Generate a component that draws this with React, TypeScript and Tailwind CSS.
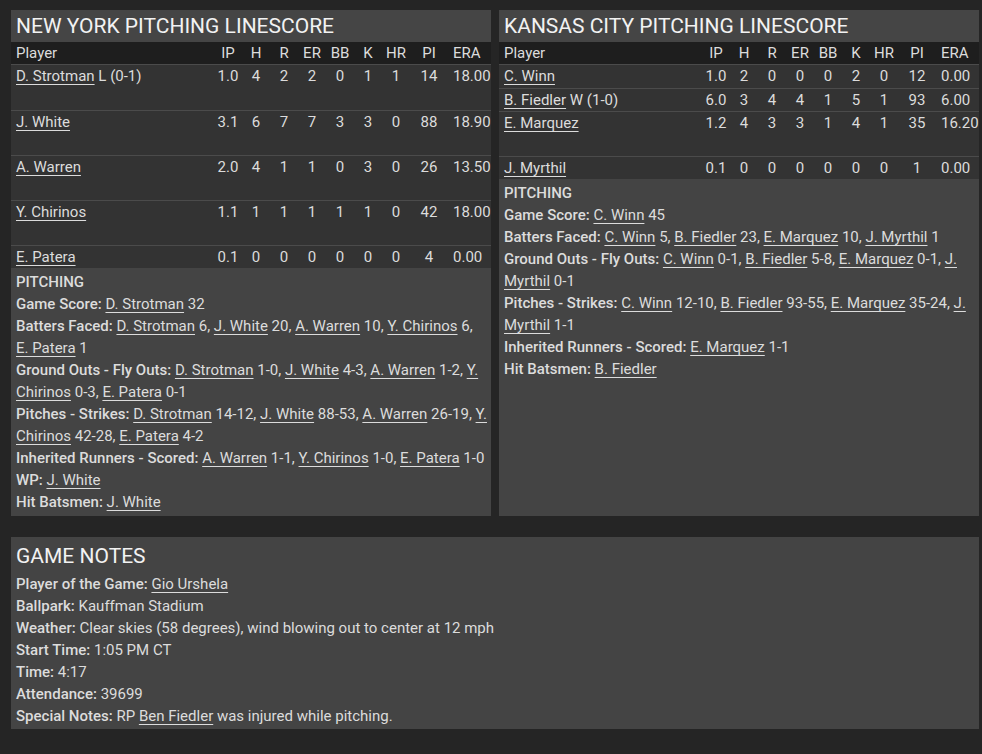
import type { ReactNode } from "react";

type Pitcher = {
  name: string;
  dec?: string;
  stats: string[];
  h: string;
};

const COLS = ["IP", "H", "R", "ER", "BB", "K", "HR", "PI"];

const nyPitchers: Pitcher[] = [
  { name: "D. Strotman", dec: "L (0-1)", stats: ["1.0", "4", "2", "2", "0", "1", "1", "14", "18.00"], h: "h-[46px]" },
  { name: "J. White", stats: ["3.1", "6", "7", "7", "3", "3", "0", "88", "18.90"], h: "h-[45px]" },
  { name: "A. Warren", stats: ["2.0", "4", "1", "1", "0", "3", "0", "26", "13.50"], h: "h-[45px]" },
  { name: "Y. Chirinos", stats: ["1.1", "1", "1", "1", "1", "1", "0", "42", "18.00"], h: "h-[45px]" },
  { name: "E. Patera", stats: ["0.1", "0", "0", "0", "0", "0", "0", "4", "0.00"], h: "h-[23px]" },
];

const kcPitchers: Pitcher[] = [
  { name: "C. Winn", stats: ["1.0", "2", "0", "0", "0", "2", "0", "12", "0.00"], h: "h-[24px]" },
  { name: "B. Fiedler", dec: "W (1-0)", stats: ["6.0", "3", "4", "4", "1", "5", "1", "93", "6.00"], h: "h-[23px]" },
  { name: "E. Marquez", stats: ["1.2", "4", "3", "3", "1", "4", "1", "35", "16.20"], h: "h-[45px]" },
  { name: "J. Myrthil", stats: ["0.1", "0", "0", "0", "0", "0", "0", "1", "0.00"], h: "h-[23px]" },
];

const L = ({ children }: { children: ReactNode }) => (
  <a href="#" className="underline underline-offset-[3px] decoration-1">
    {children}
  </a>
);

const Line = ({ label, children }: { label: string; children?: ReactNode }) => (
  <div>
    <span className="font-medium">{label}</span> {children}
  </div>
);

const grid =
  "grid grid-cols-[203px_28px_28px_28px_28px_28px_28px_28px_38px_1fr]";

function Linescore({
  title,
  pitchers,
  children,
}: {
  title: string;
  pitchers: Pitcher[];
  children: ReactNode;
}) {
  return (
    <div className="flex flex-col">
      <h2 className="bg-[#454545] px-[5px] text-[21px] leading-[32px] font-normal text-[#f2f2f2] uppercase">
        {title}
      </h2>
      <div className={`${grid} bg-[#1e1e1e] h-[22px] leading-[22px] text-[15px] text-[#dcdcdc]`}>
        <div className="pl-[5px]">Player</div>
        {COLS.map((c) => (
          <div key={c} className="text-center">
            {c}
          </div>
        ))}
        <div className="pl-[5px]">ERA</div>
      </div>
      {pitchers.map((p) => (
        <div
          key={p.name}
          className={`${grid} ${p.h} bg-[#333333] border-t border-[#4b4b4b] leading-[22px] text-[15px] text-[#dcdcdc]`}
        >
          <div className="pl-[5px] whitespace-nowrap">
            <L>{p.name}</L>
            {p.dec && <span> {p.dec}</span>}
          </div>
          {p.stats.slice(0, 8).map((s, i) => (
            <div key={i} className="text-center">
              {s}
            </div>
          ))}
          <div className="pl-[5px]">{p.stats[8]}</div>
        </div>
      ))}
      <div className="flex-1 bg-[#444444] pl-[5px] pr-[4px] py-[3px] text-[15px] leading-[22px] text-[#dcdcdc]">
        <div className="font-medium">PITCHING</div>
        {children}
      </div>
    </div>
  );
}

export default function App() {
  return (
    <div className="min-h-[754px] bg-[#252525] pt-[10px] pl-[11px] font-['Roboto','Liberation_Sans',sans-serif]">
      <div className="w-[968px]">
        <div className="grid grid-cols-2 gap-[8px]">
          <Linescore title="New York Pitching Linescore" pitchers={nyPitchers}>
            <Line label="Game Score:">
              <L>D. Strotman</L> 32
            </Line>
            <Line label="Batters Faced:">
              <L>D. Strotman</L> 6, <L>J. White</L> 20, <L>A. Warren</L> 10, <L>Y. Chirinos</L> 6, <L>E. Patera</L> 1
            </Line>
            <Line label="Ground Outs - Fly Outs:">
              <L>D. Strotman</L> 1-0, <L>J. White</L> 4-3, <L>A. Warren</L> 1-2, <L>Y. Chirinos</L> 0-3, <L>E. Patera</L> 0-1
            </Line>
            <Line label="Pitches - Strikes:">
              <L>D. Strotman</L> 14-12, <L>J. White</L> 88-53, <L>A. Warren</L> 26-19, <L>Y. Chirinos</L> 42-28, <L>E. Patera</L> 4-2
            </Line>
            <Line label="Inherited Runners - Scored:">
              <L>A. Warren</L> 1-1, <L>Y. Chirinos</L> 1-0, <L>E. Patera</L> 1-0
            </Line>
            <Line label="WP:">
              <L>J. White</L>
            </Line>
            <Line label="Hit Batsmen:">
              <L>J. White</L>
            </Line>
          </Linescore>
          <Linescore title="Kansas City Pitching Linescore" pitchers={kcPitchers}>
            <Line label="Game Score:">
              <L>C. Winn</L> 45
            </Line>
            <Line label="Batters Faced:">
              <L>C. Winn</L> 5, <L>B. Fiedler</L> 23, <L>E. Marquez</L> 10, <L>J. Myrthil</L> 1
            </Line>
            <Line label="Ground Outs - Fly Outs:">
              <L>C. Winn</L> 0-1, <L>B. Fiedler</L> 5-8, <L>E. Marquez</L> 0-1, <L>J. Myrthil</L> 0-1
            </Line>
            <Line label="Pitches - Strikes:">
              <L>C. Winn</L> 12-10, <L>B. Fiedler</L> 93-55, <L>E. Marquez</L> 35-24, <L>J. Myrthil</L> 1-1
            </Line>
            <Line label="Inherited Runners - Scored:">
              <L>E. Marquez</L> 1-1
            </Line>
            <Line label="Hit Batsmen:">
              <L>B. Fiedler</L>
            </Line>
          </Linescore>
        </div>

        <div className="mt-[21px] bg-[#444444] px-[5px] pt-[2px] pb-[2px] text-[15px] leading-[22px] text-[#dcdcdc]">
          <h2 className="text-[21px] leading-[34px] text-[#f2f2f2] uppercase">Game Notes</h2>
          <Line label="Player of the Game:">
            <L>Gio Urshela</L>
          </Line>
          <Line label="Ballpark:">Kauffman Stadium</Line>
          <Line label="Weather:">Clear skies (58 degrees), wind blowing out to center at 12 mph</Line>
          <Line label="Start Time:">1:05 PM CT</Line>
          <Line label="Time:">4:17</Line>
          <Line label="Attendance:">39699</Line>
          <Line label="Special Notes:">
            RP <L>Ben Fiedler</L> was injured while pitching.
          </Line>
        </div>
      </div>
    </div>
  );
}
